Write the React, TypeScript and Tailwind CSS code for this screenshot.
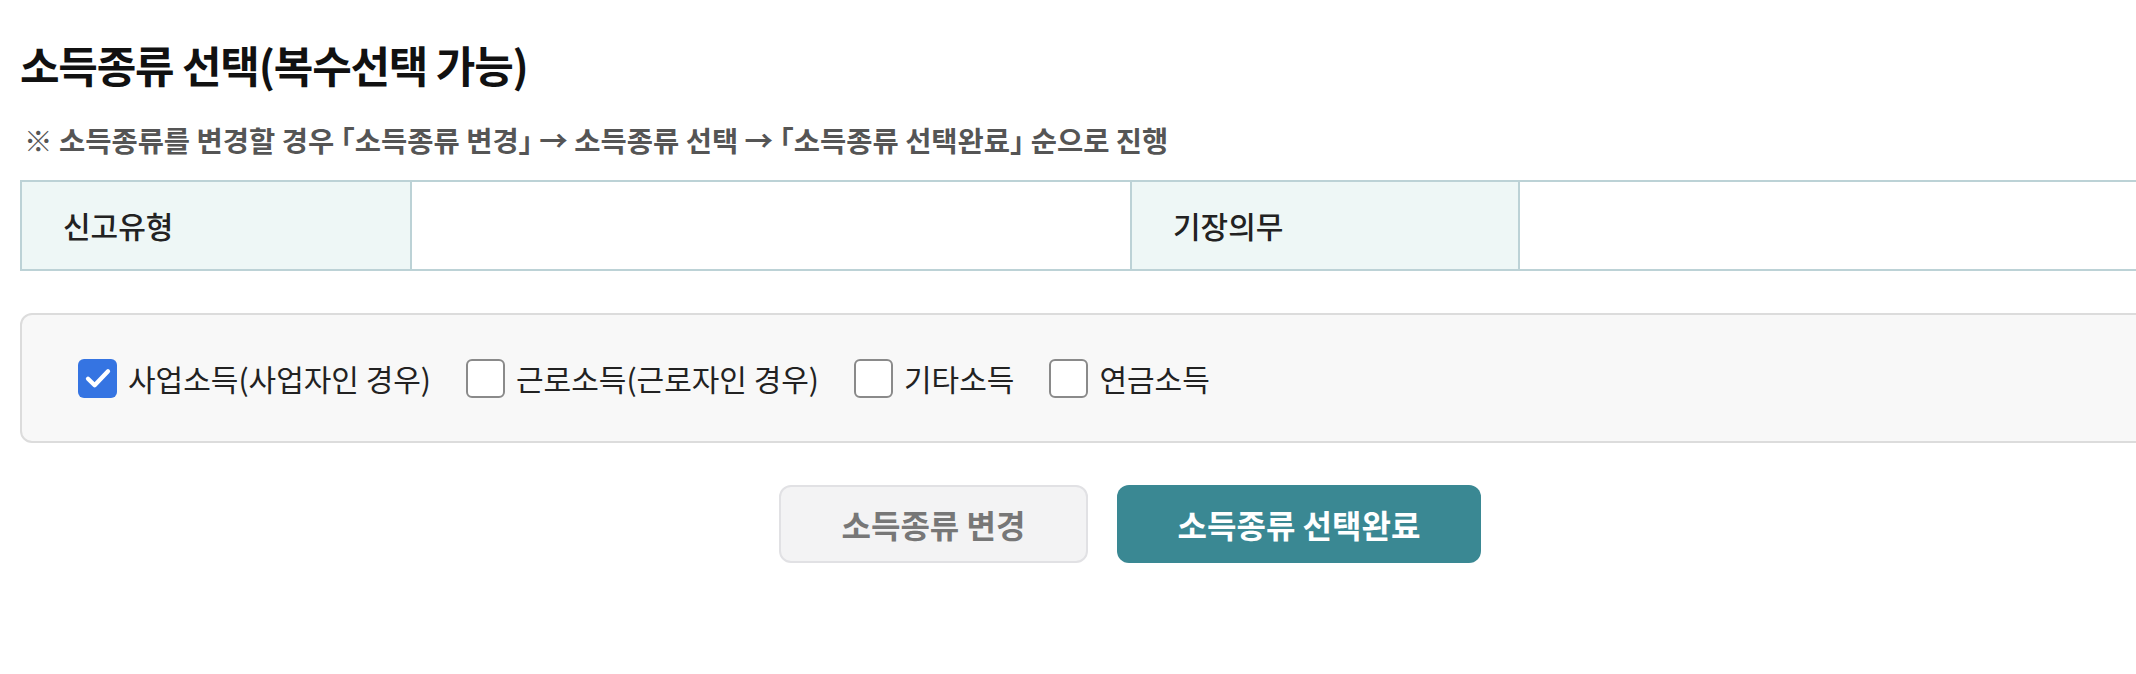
import React from "react";

const FONT = { fontFamily: '"Noto Sans CJK KR", "Noto Sans", sans-serif' };

function Checkbox({ checked, label }: { checked?: boolean; label: string }) {
  return (
    <label className="flex items-center gap-[11px] cursor-pointer">
      {checked ? (
        <span className="flex h-[39px] w-[39px] items-center justify-center rounded-[6px] bg-[#3574e2]">
          <svg width="32" height="32" viewBox="0 0 24 24" fill="none">
            <polyline
              points="4.5,12.5 9.5,17.5 19.5,7"
              stroke="#ffffff"
              strokeWidth="3.2"
              strokeLinecap="round"
              strokeLinejoin="round"
            />
          </svg>
        </span>
      ) : (
        <span className="h-[39px] w-[39px] rounded-[6px] border-2 border-[#8a8a8a] bg-white" />
      )}
      <span className="text-[30px] leading-[40px] text-[#222222]">{label}</span>
    </label>
  );
}

export default function App() {
  return (
    <div className="w-full overflow-hidden bg-white" style={FONT}>
      <div className="ml-[20px] w-[2220px] pt-[38px]">
        <h1 className="text-[43px] font-bold leading-[52px] tracking-[-1.2px] text-[#111111]">
          소득종류 선택(복수선택 가능)
        </h1>
        <p className="mt-[33px] pl-[4px] text-[28.5px] font-semibold leading-[34px] text-[#555555]">
          ※ 소득종류를 변경할 경우 ｢소득종류 변경｣ → 소득종류 선택 → ｢소득종류 선택완료｣ 순으로 진행
        </p>

        <div className="mt-[23px] flex h-[91px] border-y-2 border-l-2 border-[#bcd2d6]">
          <div className="flex w-[390px] items-center border-r-2 border-[#bcd2d6] bg-[#eef7f6] pl-[41px] text-[30px] font-medium text-[#222222]">
            신고유형
          </div>
          <div className="w-[720px] border-r-2 border-[#bcd2d6] bg-white" />
          <div className="flex w-[388px] items-center border-r-2 border-[#bcd2d6] bg-[#eef7f6] pl-[41px] text-[30px] font-medium text-[#222222]">
            기장의무
          </div>
          <div className="flex-1 border-r-2 border-[#bcd2d6] bg-white" />
        </div>

        <div className="mt-[42px] flex h-[130px] items-center gap-[35px] rounded-[12px] border-2 border-[#dcdcdc] bg-[#f8f8f8] pl-[56px]">
          <Checkbox checked label="사업소득(사업자인 경우)" />
          <Checkbox label="근로소득(근로자인 경우)" />
          <Checkbox label="기타소득" />
          <Checkbox label="연금소득" />
        </div>

        <div className="mt-[42px] flex justify-center gap-[29px]">
          <button className="h-[78px] w-[309px] rounded-[12px] border-2 border-[#e1e1e4] bg-[#f3f3f4] text-[32px] font-bold text-[#777777]">
            소득종류 변경
          </button>
          <button className="h-[78px] w-[364px] rounded-[12px] bg-[#3a8893] text-[32px] font-bold text-white">
            소득종류 선택완료
          </button>
        </div>
        <div className="h-[111px]" />
      </div>
    </div>
  );
}
